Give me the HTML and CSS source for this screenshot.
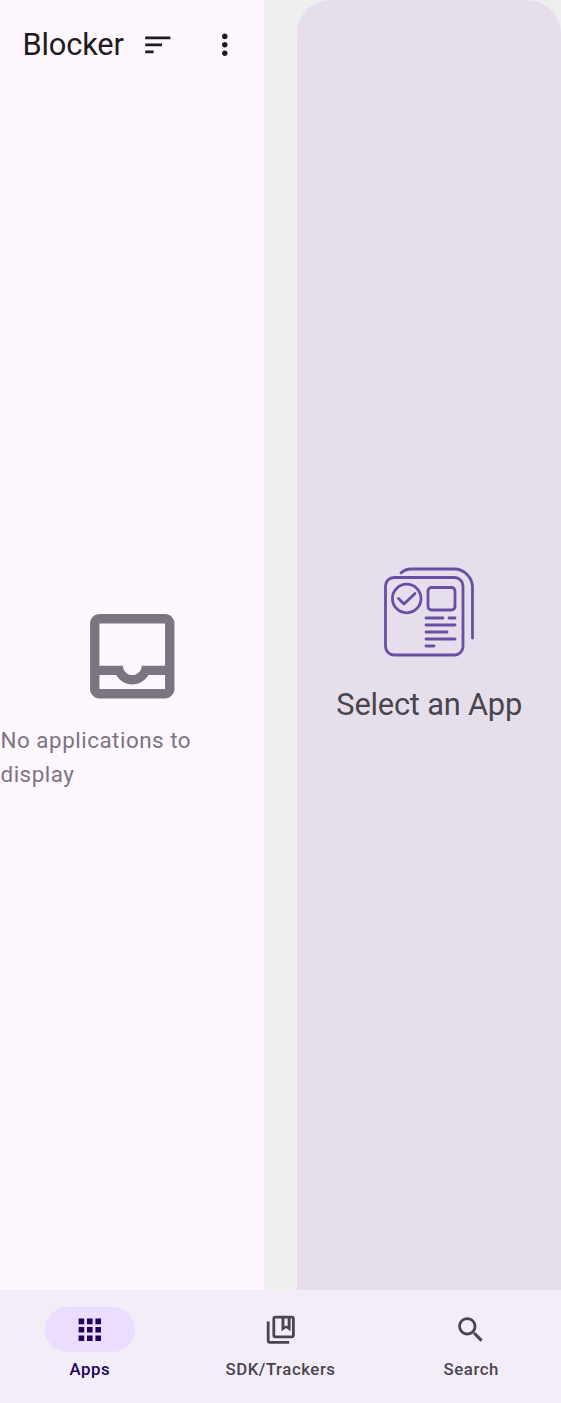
FILE: index.html
```html
<!DOCTYPE html>
<html lang="en">
<head>
<meta charset="utf-8">
<title>Blocker</title>
<link rel="stylesheet" href="styles.css">
</head>
<body>
<div class="app">
  <main class="panes">
    <section class="list-pane">
      <header class="top-bar">
        <h1 class="title">Blocker</h1>
        <button class="icon-button" aria-label="Sort">
          <svg class="icon" viewBox="0 0 24 24"><path d="M3 18h6v-2H3v2zM3 6v2h18V6H3zm0 7h12v-2H3v2z"/></svg>
        </button>
        <button class="icon-button" aria-label="More">
          <svg class="icon" viewBox="0 0 24 24"><path d="M12 8c1.1 0 2-.9 2-2s-.9-2-2-2-2 .9-2 2 .9 2 2 2zm0 2c-1.1 0-2 .9-2 2s.9 2 2 2 2-.9 2-2-.9-2-2-2zm0 6c-1.1 0-2 .9-2 2s.9 2 2 2 2-.9 2-2-.9-2-2-2z"/></svg>
        </button>
      </header>
      <div class="empty">
        <svg class="empty-icon" viewBox="0 0 24 24"><path d="M19 3H5c-1.1 0-2 .9-2 2v14c0 1.1.9 2 2 2h14c1.1 0 2-.9 2-2V5c0-1.1-.9-2-2-2zm0 16H5v-3h3.56c.69 1.19 1.97 2 3.45 2s2.75-.81 3.45-2H19v3zm0-5h-4.99c0 1.1-.9 2-2 2s-2-.9-2-2H5V5h14v9z"/></svg>
        <p class="empty-text">No applications to display</p>
      </div>
    </section>
    <section class="detail-pane">
      <svg class="detail-icon" viewBox="0 0 90 90">
        <rect x="1.5" y="9.5" width="77.5" height="77.5" rx="8.5"/>
        <path d="M17 5Q21 1 27 1H70A18.5 18.5 0 0 1 88.5 19.5V70"/>
        <circle cx="22.7" cy="30.5" r="14.3"/>
        <path d="M14.5 30.5L20 36L31 25.5"/>
        <rect x="44" y="19.5" width="27" height="22.5" rx="3.5"/>
        <path d="M42 50h17M65 50h6M42 57h29M42 64h21M42 71h29M42 78h8"/>
      </svg>
      <p class="detail-text">Select an App</p>
    </section>
  </main>
  <nav class="nav">
    <a class="nav-item active">
      <span class="pill"><svg class="icon" viewBox="0 0 24 24"><path d="M4 8h4V4H4v4zm6 12h4v-4h-4v4zm-6 0h4v-4H4v4zm0-6h4v-4H4v4zm6 0h4v-4h-4v4zm6-10v4h4V4h-4zm-6 4h4V4h-4v4zm6 6h4v-4h-4v4zm0 6h4v-4h-4v4z"/></svg></span>
      <span class="label">Apps</span>
    </a>
    <a class="nav-item">
      <span class="pill"><svg class="icon" viewBox="0 0 24 24"><path d="M4 6H2v14c0 1.1.9 2 2 2h14v-2H4V6z"/><path fill-rule="evenodd" d="M20 2H8c-1.1 0-2 .9-2 2v12c0 1.1.9 2 2 2h12c1.1 0 2-.9 2-2V4c0-1.1-.9-2-2-2zm0 14H8V4h4.5v9l3.250-2.250L19 13V4h1v12zM14.600 4h2.300v5.600l-1.150-.85-1.150.85V4z"/></svg></span>
      <span class="label">SDK/Trackers</span>
    </a>
    <a class="nav-item">
      <span class="pill"><svg class="icon" viewBox="0 0 24 24"><path d="M15.5 14h-.79l-.28-.27C15.41 12.59 16 11.11 16 9.5 16 5.91 13.09 3 9.5 3S3 5.91 3 9.5 5.91 16 9.5 16c1.61 0 3.09-.59 4.23-1.57l.27.28v.79l5 4.99L20.49 19l-4.99-5zm-6 0C7.01 14 5 11.99 5 9.5S7.01 5 9.5 5 14 7.01 14 9.5 11.99 14 9.5 14z"/></svg></span>
      <span class="label">Search</span>
    </a>
  </nav>
</div>
</body>
</html>
```
FILE: styles.css
```css
* { box-sizing: border-box; margin: 0; padding: 0; }
body { font-family: Roboto, sans-serif; background: #efeff0; }
.app { width: 561px; height: 1403px; display: flex; flex-direction: column; overflow: hidden; }
.panes { flex: 1; display: flex; gap: 33.4px; }
.list-pane { flex: 0 0 264px; background: #fef7ff; display: flex; flex-direction: column; }
.top-bar { height: 90px; display: flex; align-items: center; padding: 0 5.2px 0 22.4px; }
.title { flex: 1; font-size: 30.8px; font-weight: 400; line-height: 39.2px; letter-spacing: -0.15px; color: #1d1b20; white-space: nowrap; }
.icon-button { width: 67.2px; height: 67.2px; border: 0; background: none; color: #1d1b20; display: flex; align-items: center; justify-content: center; }
.icon { width: 33.6px; height: 33.6px; fill: currentColor; display: block; }
.empty { flex: 1; display: flex; flex-direction: column; align-items: center; justify-content: center; gap: 12px; padding-top: 11.1px; color: #7a757f; }
.empty-icon { width: 112.5px; height: 112.5px; fill: currentColor; }
.empty-text { width: 100%; padding-left: 0.5px; font-size: 22.4px; line-height: 33.6px; letter-spacing: 0.52px; }
.detail-pane { flex: 1; background: #e6dfeb; border-radius: 33.6px 33.6px 0 0; display: flex; flex-direction: column; align-items: center; justify-content: center; gap: 27px; padding-top: 1px; }
.detail-icon { width: 90px; height: 90px; fill: none; stroke: #6750a4; stroke-width: 2.8; stroke-linecap: round; stroke-linejoin: round; overflow: visible; }
.detail-text { font-size: 30.8px; line-height: 39.2px; letter-spacing: -0.2px; color: #49454f; white-space: nowrap; }
.nav { height: 112.6px; background: #f3edf7; display: flex; gap: 11.2px; padding-top: 16.8px; color: #49454f; }
.nav-item { flex: 1; display: flex; flex-direction: column; align-items: center; gap: 5.8px; }
.pill { width: 89.6px; height: 44.8px; border-radius: 22.4px; display: flex; align-items: center; justify-content: center; }
.active { color: #21005d; }
.active .pill { background: #eaddff; }
.label { font-size: 16.8px; font-weight: 500; line-height: 22.4px; letter-spacing: 0.55px; }
```
